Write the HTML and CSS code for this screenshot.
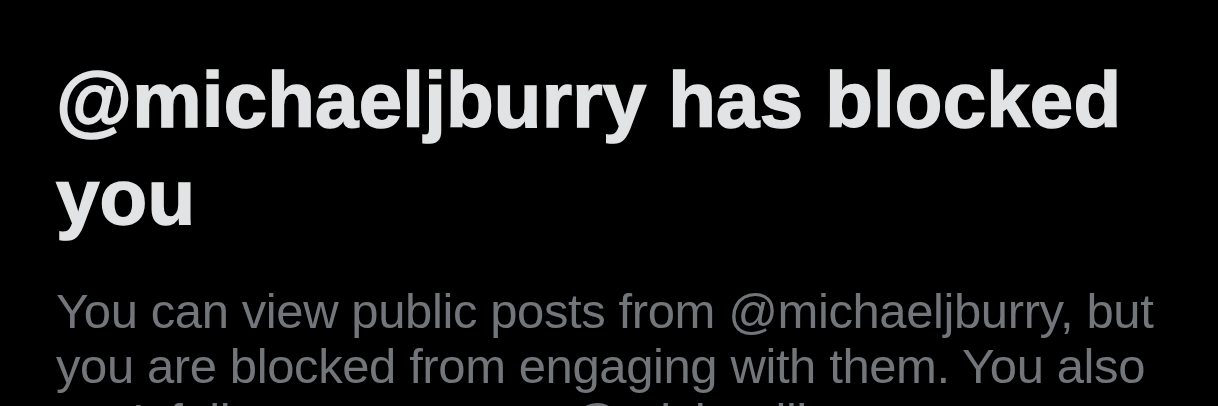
FILE: index.html
```html
<!DOCTYPE html>
<html lang="en">
<head>
<meta charset="utf-8">
<title>Blocked</title>
<link rel="stylesheet" href="styles.css">
</head>
<body>
<main class="blocked">
  <h1 class="blocked-title">@michaeljburry has blocked you</h1>
  <p class="blocked-text">You can view public posts from @michaeljburry, but you are blocked from engaging with them. You also can't follow or message @michaeljburry.</p>
</main>
</body>
</html>
```

FILE: styles.css
```css
html, body {
  margin: 0;
  padding: 0;
  background: #000;
  height: 100%;
  overflow: hidden;
}

.blocked {
  padding: 52px 46px 0 56px;
  width: 1116px;
}

.blocked-title {
  margin: 0;
  font-family: "Liberation Sans", Arial, sans-serif;
  font-weight: 700;
  font-size: 78px;
  line-height: 97px;
  color: #e2e3e4;
  -webkit-text-stroke: 1.5px #e2e3e4;
  letter-spacing: 0.2px;
}

.blocked-text {
  margin: 38px 0 0;
  font-family: "Liberation Sans", Arial, sans-serif;
  font-weight: 400;
  font-size: 49px;
  line-height: 55px;
  color: #72767b;
  letter-spacing: -0.4px;
}
```
